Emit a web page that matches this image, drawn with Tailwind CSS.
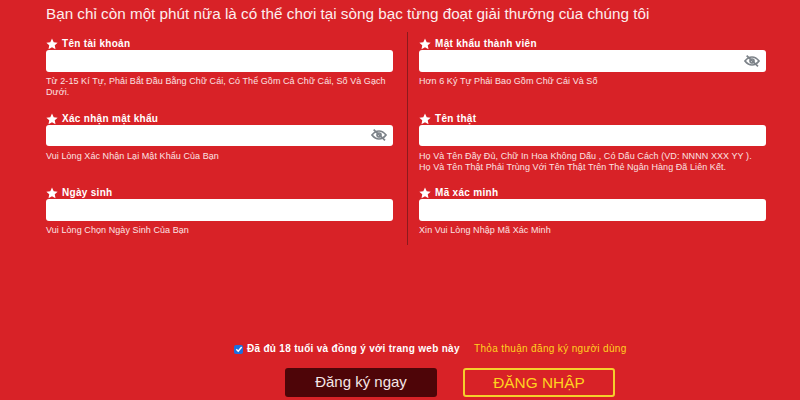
<!DOCTYPE html>
<html lang="vi">
<head>
    <meta charset="UTF-8">
    <title>Đăng ký</title>
    <script src="https://cdn.jsdelivr.net/npm/@tailwindcss/browser@4"></script>
</head>
<body class="bg-[#d82227] font-['Liberation_Sans',Arial,sans-serif] text-white">
    <div class="w-[800px] h-[400px] overflow-hidden flex flex-col">
        <h1 class="pl-[46px] pt-[5px] h-[32px] text-[15.25px] leading-[18px] font-normal text-[#fdeeee]">Bạn chỉ còn một phút nữa là có thể chơi tại sòng bạc từng đoạt giải thưởng của chúng tôi</h1>

        <div class="flex h-[213px]">
            <div class="w-[347px] ml-[46px] flex flex-col">
                <div class="h-[74.5px] pt-[6px]">
                    <label class="flex items-center gap-[4px] h-[12px] text-[10px] leading-[12px] font-bold tracking-[0.3px]">
                        <svg class="w-[12px] h-[12px] fill-white" viewBox="0 0 24 24"><path d="M12 1l3.4 7.3 7.9 1-5.8 5.4 1.5 7.9L12 18.7l-7 3.9 1.5-7.9L.7 9.3l7.9-1z"/></svg>
                        Tên tài khoản
                    </label>
                    <div class="h-[21.5px] bg-white rounded-[3px]"></div>
                    <p class="mt-[4.5px] text-[9px] leading-[11px] text-[#fbe3e3] tracking-[0.07px]">Từ 2-15 Kí Tự, Phải Bắt Đầu Bằng Chữ Cái, Có Thể Gồm Cả Chữ Cái, Số Và Gạch Dưới.</p>
                </div>
                <div class="h-[74.5px] pt-[6px]">
                    <label class="flex items-center gap-[4px] h-[12px] text-[10px] leading-[12px] font-bold tracking-[0.3px]">
                        <svg class="w-[12px] h-[12px] fill-white" viewBox="0 0 24 24"><path d="M12 1l3.4 7.3 7.9 1-5.8 5.4 1.5 7.9L12 18.7l-7 3.9 1.5-7.9L.7 9.3l7.9-1z"/></svg>
                        Xác nhận mật khẩu
                    </label>
                    <div class="h-[21.5px] bg-white rounded-[3px] flex items-center justify-end pr-[6px]">
                        <svg class="w-[16px] h-[12px] text-[#7c8288]" viewBox="0 0 24 18" fill="none" stroke="currentColor" stroke-width="2.6"><path d="M1.5 9C5 4.500 8.500 3 12 3S19 4.500 22.500 9C19 13.500 15.500 15 12 15S5 13.500 1.500 9z"/><circle cx="12" cy="9" r="3"/><path d="M4 1l17 16"/></svg>
                    </div>
                    <p class="mt-[4.5px] text-[9px] leading-[11px] text-[#fbe3e3] tracking-[0.07px]">Vui Lòng Xác Nhận Lại Mật Khẩu Của Bạn</p>
                </div>
                <div class="h-[64px] pt-[6px]">
                    <label class="flex items-center gap-[4px] h-[12px] text-[10px] leading-[12px] font-bold tracking-[0.3px]">
                        <svg class="w-[12px] h-[12px] fill-white" viewBox="0 0 24 24"><path d="M12 1l3.4 7.3 7.9 1-5.8 5.4 1.5 7.9L12 18.7l-7 3.9 1.5-7.9L.7 9.3l7.9-1z"/></svg>
                        Ngày sinh
                    </label>
                    <div class="h-[21.5px] bg-white rounded-[3px]"></div>
                    <p class="mt-[4.5px] text-[9px] leading-[11px] text-[#fbe3e3] tracking-[0.07px]">Vui Lòng Chọn Ngày Sinh Của Bạn</p>
                </div>
            </div>

            <div class="w-px ml-[14px] bg-[#8c1a1d]"></div>

            <div class="w-[347px] ml-[11px] flex flex-col">
                <div class="h-[74.5px] pt-[6px]">
                    <label class="flex items-center gap-[4px] h-[12px] text-[10px] leading-[12px] font-bold tracking-[0.3px]">
                        <svg class="w-[12px] h-[12px] fill-white" viewBox="0 0 24 24"><path d="M12 1l3.4 7.3 7.9 1-5.8 5.4 1.5 7.9L12 18.7l-7 3.9 1.5-7.9L.7 9.3l7.9-1z"/></svg>
                        Mật khẩu thành viên
                    </label>
                    <div class="h-[21.5px] bg-white rounded-[3px] flex items-center justify-end pr-[6px]">
                        <svg class="w-[16px] h-[12px] text-[#7c8288]" viewBox="0 0 24 18" fill="none" stroke="currentColor" stroke-width="2.6"><path d="M1.5 9C5 4.500 8.500 3 12 3S19 4.500 22.500 9C19 13.500 15.500 15 12 15S5 13.500 1.500 9z"/><circle cx="12" cy="9" r="3"/><path d="M4 1l17 16"/></svg>
                    </div>
                    <p class="mt-[4.5px] text-[9px] leading-[11px] text-[#fbe3e3] tracking-[0.07px]">Hơn 6 Ký Tự Phải Bao Gồm Chữ Cái Và Số</p>
                </div>
                <div class="h-[74.5px] pt-[6px]">
                    <label class="flex items-center gap-[4px] h-[12px] text-[10px] leading-[12px] font-bold tracking-[0.3px]">
                        <svg class="w-[12px] h-[12px] fill-white" viewBox="0 0 24 24"><path d="M12 1l3.4 7.3 7.9 1-5.8 5.4 1.5 7.9L12 18.7l-7 3.9 1.5-7.9L.7 9.3l7.9-1z"/></svg>
                        Tên thật
                    </label>
                    <div class="h-[21.5px] bg-white rounded-[3px]"></div>
                    <p class="mt-[4.5px] text-[9px] leading-[11px] text-[#fbe3e3] tracking-[0.07px]">Họ Và Tên Đầy Đủ, Chữ In Hoa Không Dấu , Có Dấu Cách (VD: NNNN XXX YY ).<br>Họ Và Tên Thật Phải Trùng Với Tên Thật Trên Thẻ Ngân Hàng Đã Liên Kết.</p>
                </div>
                <div class="h-[64px] pt-[6px]">
                    <label class="flex items-center gap-[4px] h-[12px] text-[10px] leading-[12px] font-bold tracking-[0.3px]">
                        <svg class="w-[12px] h-[12px] fill-white" viewBox="0 0 24 24"><path d="M12 1l3.4 7.3 7.9 1-5.8 5.4 1.5 7.9L12 18.7l-7 3.9 1.5-7.9L.7 9.3l7.9-1z"/></svg>
                        Mã xác minh
                    </label>
                    <div class="h-[21.5px] bg-white rounded-[3px]"></div>
                    <p class="mt-[4.5px] text-[9px] leading-[11px] text-[#fbe3e3] tracking-[0.07px]">Xin Vui Lòng Nhập Mã Xác Minh</p>
                </div>
            </div>
        </div>

        <div class="mt-[97px] pl-[234px] flex items-center h-[14px]">
            <span class="w-[9px] h-[9px] rounded-[2px] bg-[#1a6fe0] flex items-center justify-center">
                <svg class="w-[8px] h-[8px]" viewBox="0 0 12 12" fill="none" stroke="white" stroke-width="2.2"><path d="M2 6.500l2.800 2.800L10 3"/></svg>
            </span>
            <span class="ml-[4px] w-[227px] text-[10px] leading-[14px] font-bold tracking-[0.3px]">Đã đủ 18 tuổi và đồng ý với trang web này</span>
            <a class="text-[10px] leading-[14px] text-[#ffd21f] tracking-[0.34px]">Thỏa thuận đăng ký người dùng</a>
        </div>

        <div class="mt-[12px] pl-[285px] flex gap-[26px]">
            <button class="w-[152px] h-[29px] rounded-[3px] bg-[#4e0508] text-[15px] text-[#f5e6e6]">Đăng ký ngay</button>
            <button class="w-[152px] h-[29px] rounded-[3px] border-2 border-[#f5cf2c] text-[15.4px] text-[#ffd21f]">ĐĂNG NHẬP</button>
        </div>
    </div>
</body>
</html>
